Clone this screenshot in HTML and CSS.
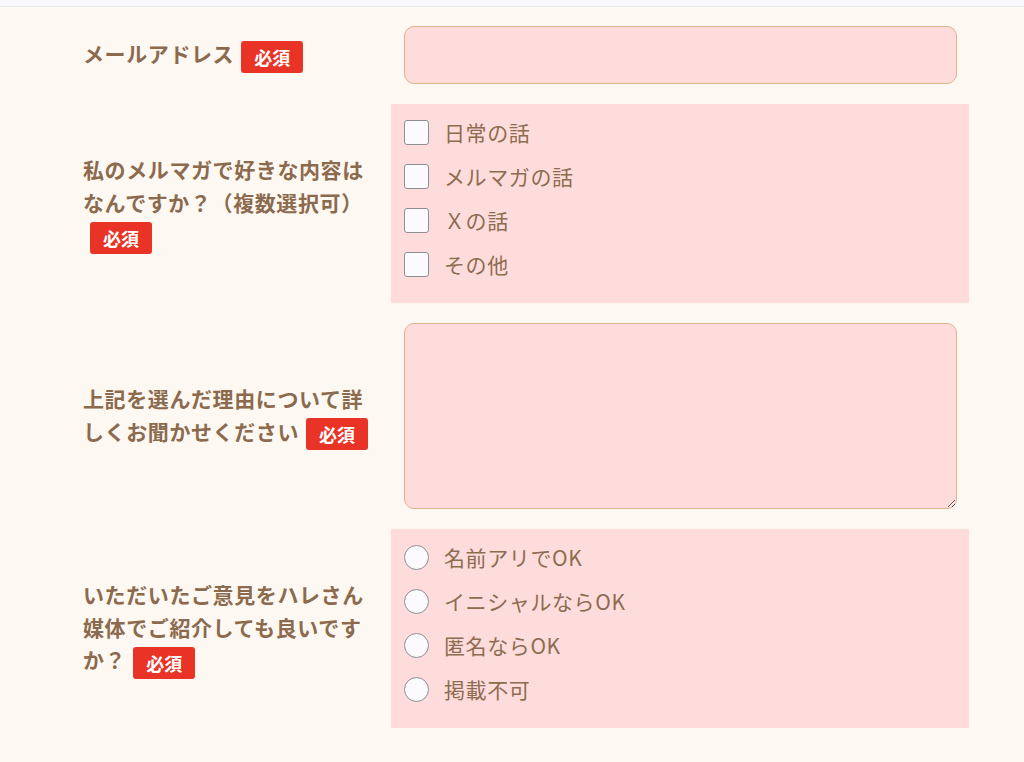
FILE: index.html
```html
<!DOCTYPE html>
<html lang="ja">
<head>
<meta charset="utf-8">
<link rel="stylesheet" href="styles.css">
</head>
<body>
<div class="topbar"></div>
<form class="form">
  <div class="row">
    <div class="label"><span class="ltext">メールアドレス</span><span class="req">必須</span></div>
    <div class="field"><input class="text" type="email"></div>
  </div>
  <div class="row">
    <div class="label"><span class="ltext">私のメルマガで好きな内容はなんですか？（複数選択可）</span><span class="req">必須</span></div>
    <div class="field group">
      <label class="opt"><input type="checkbox" class="cb"><span>日常の話</span></label>
      <label class="opt"><input type="checkbox" class="cb"><span>メルマガの話</span></label>
      <label class="opt"><input type="checkbox" class="cb"><span>Ｘの話</span></label>
      <label class="opt"><input type="checkbox" class="cb"><span>その他</span></label>
    </div>
  </div>
  <div class="row">
    <div class="label"><span class="ltext">上記を選んだ理由について詳しくお聞かせください</span><span class="req">必須</span></div>
    <div class="field"><textarea class="area"></textarea></div>
  </div>
  <div class="row">
    <div class="label"><span class="ltext">いただいたご意見をハレさん媒体でご紹介しても良いですか？</span><span class="req">必須</span></div>
    <div class="field group">
      <label class="opt"><input type="radio" name="pub" class="rb"><span>名前アリでOK</span></label>
      <label class="opt"><input type="radio" name="pub" class="rb"><span>イニシャルならOK</span></label>
      <label class="opt"><input type="radio" name="pub" class="rb"><span>匿名ならOK</span></label>
      <label class="opt"><input type="radio" name="pub" class="rb"><span>掲載不可</span></label>
    </div>
  </div>
</form>
</body>
</html>
```
FILE: styles.css
```css
* { box-sizing: border-box; }
html, body {
  margin: 0;
  padding: 0;
  background: #fef8f2;
  font-family: "Noto Sans CJK JP", "Noto Sans", sans-serif;
  color: #8b6a4d;
}
.topbar {
  height: 7px;
  background: #f9f9fd;
  border-bottom: 1px solid #e6e8f1;
}
.form {
  display: flex;
  flex-direction: column;
  gap: 20px;
  padding: 19px 0 30px 83px;
}
.row {
  display: grid;
  grid-template-columns: 288px 578px;
  column-gap: 20px;
  align-items: center;
}
.label {
  font-weight: 700;
  font-size: 21px;
  letter-spacing: 0.6px;
  line-height: 32.5px;
}
.req {
  display: inline-block;
  background: #e83326;
  color: #fff;
  font-size: 18px;
  letter-spacing: 0;
  line-height: 32px;
  height: 32px;
  padding: 0 13px;
  border-radius: 3px;
  margin-left: 7px;
  vertical-align: middle;
}
.field { width: 578px; }
.text, .area {
  display: block;
  margin: 0 12px 0 13px;
  width: 553px;
  background: #ffdcdc;
  border: 1.5px solid #deb38d;
  border-radius: 10px;
  font: inherit;
  outline: none;
}
.text { height: 58px; }
.area { height: 186px; resize: vertical; }
.group {
  background: #ffdcdc;
  padding: 6px 13px 17px;
  display: flex;
  flex-direction: column;
}
.opt {
  display: flex;
  align-items: center;
  height: 44px;
  font-size: 21px;
  letter-spacing: 0.6px;
  color: #8d6c50;
}
.cb, .rb {
  appearance: none;
  -webkit-appearance: none;
  margin: 0 15px 0 0;
  width: 25px;
  height: 25px;
  background: #fafaff;
  border: 1.5px solid #8f8f93;
  flex: none;
}
.cb { border-radius: 3px; }
.rb { border-radius: 50%; }
```
